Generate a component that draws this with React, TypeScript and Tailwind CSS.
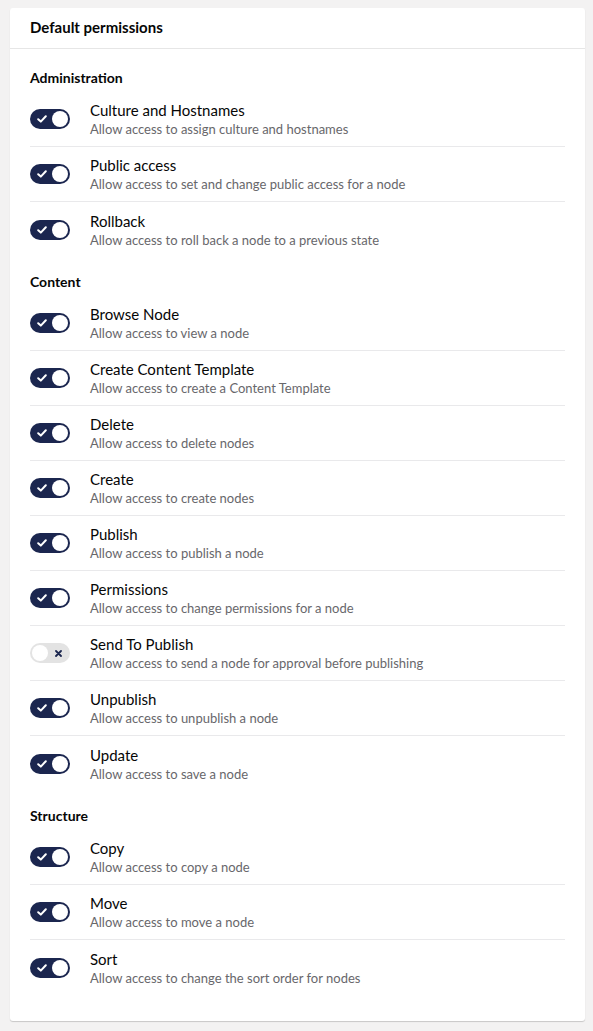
import React from "react";

type Perm = { name: string; desc: string; on: boolean };

const groups: { title: string; items: Perm[] }[] = [
  {
    title: "Administration",
    items: [
      { name: "Culture and Hostnames", desc: "Allow access to assign culture and hostnames", on: true },
      { name: "Public access", desc: "Allow access to set and change public access for a node", on: true },
      { name: "Rollback", desc: "Allow access to roll back a node to a previous state", on: true },
    ],
  },
  {
    title: "Content",
    items: [
      { name: "Browse Node", desc: "Allow access to view a node", on: true },
      { name: "Create Content Template", desc: "Allow access to create a Content Template", on: true },
      { name: "Delete", desc: "Allow access to delete nodes", on: true },
      { name: "Create", desc: "Allow access to create nodes", on: true },
      { name: "Publish", desc: "Allow access to publish a node", on: true },
      { name: "Permissions", desc: "Allow access to change permissions for a node", on: true },
      { name: "Send To Publish", desc: "Allow access to send a node for approval before publishing", on: false },
      { name: "Unpublish", desc: "Allow access to unpublish a node", on: true },
      { name: "Update", desc: "Allow access to save a node", on: true },
    ],
  },
  {
    title: "Structure",
    items: [
      { name: "Copy", desc: "Allow access to copy a node", on: true },
      { name: "Move", desc: "Allow access to move a node", on: true },
      { name: "Sort", desc: "Allow access to change the sort order for nodes", on: true },
    ],
  },
];

function Toggle({ on }: { on: boolean }) {
  if (on) {
    return (
      <div className="relative w-[40px] h-[20px] rounded-full bg-[#1b264f] shrink-0">
        <svg className="absolute left-[7px] top-[6px]" width="10" height="8" viewBox="0 0 10 8">
          <path d="M1.2 4.2 L3.8 6.6 L8.8 1.2" fill="none" stroke="#fff" strokeWidth="2" strokeLinecap="round" strokeLinejoin="round" />
        </svg>
        <div className="absolute right-[2px] top-[2px] w-[16px] h-[16px] rounded-full bg-white" />
      </div>
    );
  }
  return (
    <div className="relative w-[40px] h-[20px] rounded-full bg-[#e3e3e3] shrink-0">
      <div className="absolute left-[2px] top-[2px] w-[16px] h-[16px] rounded-full bg-white" />
      <svg className="absolute right-[8px] top-[7px]" width="7" height="7" viewBox="0 0 7 7">
        <path d="M1 1 L6 6 M6 1 L1 6" fill="none" stroke="#1b264f" strokeWidth="1.8" strokeLinecap="round" />
      </svg>
    </div>
  );
}

export default function App() {
  return (
    <div className="min-h-[1031px] bg-[#f3f2f2] pt-[8px] pl-[10px] pr-[8px] pb-[10px] font-['Lato','Noto_Sans',sans-serif] text-[#060606]">
      <div className="bg-white rounded-[3px] shadow-[0_1px_1px_rgba(0,0,0,0.18)]">
        <div className="h-[41px] px-[20px] flex items-center border-b border-[#e6e6e6]">
          <h2 className="text-[15px] font-bold leading-[20px] mb-[2px] text-[#060606]">Default permissions</h2>
        </div>
        <div className="px-[20px] pt-[19px] pb-[26px]">
          {groups.map((g, gi) => (
            <div key={g.title} className={gi > 0 ? "mt-[15px]" : ""}>
              <h3 className="text-[14px] font-bold leading-[20px] mb-[4px]">{g.title}</h3>
              <div>
                {g.items.map((p, i) => (
                  <div
                    key={p.name}
                    className={
                      "flex items-center gap-[20px] h-[55px] " +
                      (i < g.items.length - 1 ? "border-b border-[#e9e9eb]" : "")
                    }
                  >
                    <Toggle on={p.on} />
                    <div className="flex flex-col">
                      <span className="text-[15px] leading-[20px] text-[#060606]">{p.name}</span>
                      <span className="text-[13px] leading-[18px] text-[#68676b]">{p.desc}</span>
                    </div>
                  </div>
                ))}
              </div>
            </div>
          ))}
        </div>
      </div>
    </div>
  );
}
